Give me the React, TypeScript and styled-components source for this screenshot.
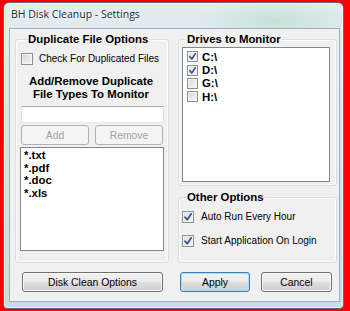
import React from 'react';
import styled, { createGlobalStyle } from 'styled-components';

const Global = createGlobalStyle`
  html, body { margin: 0; padding: 0; background: #ff0000; }
  body { width: 350px; height: 311px; overflow: hidden; }
  * { box-sizing: border-box; }
`;

const Page = styled.div`
  width: 350px;
  height: 311px;
  background: #ff0000;
  padding: 2px 6px 2px 3px;
  display: flex;
`;

const Window = styled.div`
  flex: 1;
  display: flex;
  flex-direction: column;
  border: 1px solid #5b6d7e;
  border-radius: 6px 6px 4px 4px;
  background:
    radial-gradient(ellipse 120px 30px at 80% 18px, rgba(175, 218, 196, 0.55), rgba(175, 218, 196, 0) 70%),
    linear-gradient(180deg, #e4ecf1 0%, #d8e3ea 45%, #cddbe5 100%);
  padding: 0 3px 6px 5px;
  box-shadow: inset 0 0 0 1px rgba(255, 255, 255, 0.55);
`;

const TitleBar = styled.div`
  height: 25px;
  padding: 3px 0 0 2px;
  font-family: "Open Sans", "Noto Sans", sans-serif;
  font-size: 10.5px;
  line-height: 16px;
  color: #1c2630;
  text-shadow: 0 0 5px rgba(255, 255, 255, 0.95), 0 0 2px rgba(255, 255, 255, 0.9);
  white-space: nowrap;
`;

const Client = styled.div`
  flex: 1;
  border: 1px solid #a2aeb9;
  background: #f0f0f0;
  display: flex;
  flex-direction: column;
  padding: 4px 2px 0 5px;
  font-family: "Liberation Sans", Arial, sans-serif;
  font-size: 10px;
  color: #000;
`;

const TopRow = styled.div`
  display: grid;
  grid-template-columns: 154px 159px;
  column-gap: 9px;
  height: 230px;
`;

const RightColumn = styled.div`
  display: flex;
  flex-direction: column;
  gap: 5px;
`;

const Group = styled.fieldset<{ $height?: number; $padL: number; $padR: number; $padB: number }>`
  margin: 0;
  min-width: 0;
  border: 1px solid #d5dfe5;
  border-radius: 3px;
  box-shadow: inset 0 0 0 1px #fbfbfb;
  padding: 0 ${p => p.$padR}px ${p => p.$padB}px ${p => p.$padL}px;
  display: block;
  ${p => (p.$height ? `height: ${p.$height}px; flex: none;` : 'flex: 1;')}
`;

const Legend = styled.legend<{ $indent: number }>`
  margin-left: ${p => p.$indent}px;
  padding: 0 1px;
  font-weight: bold;
  font-size: 11.4px;
  line-height: 12px;
  background: #f0f0f0;
  color: #000;
`;

const CheckRow = styled.label<{ $gap: number; $top: number }>`
  display: flex;
  align-items: center;
  gap: ${p => p.$gap}px;
  height: 13px;
  margin-top: ${p => p.$top}px;
  white-space: nowrap;
`;

const Box = styled.span<{ $size: number; $checked: boolean }>`
  width: ${p => p.$size}px;
  height: ${p => p.$size}px;
  flex: none;
  border: 1px solid #8e8f8f;
  background: ${p =>
    p.$checked
      ? 'linear-gradient(135deg, #d9dcee 0%, #f3f4fb 100%)'
      : 'linear-gradient(135deg, #d6d6d6 0%, #f7f7f7 100%)'};
  box-shadow: inset 0 0 0 1px #f4f4f4;
  display: flex;
  align-items: center;
  justify-content: center;
`;

const Heading = styled.div`
  margin-top: 10px;
  text-align: center;
  font-weight: bold;
  font-size: 11.4px;
  line-height: 13px;
  padding-right: 3px;
`;

const TextInput = styled.div`
  margin-top: 5px;
  height: 17px;
  background: #fff;
  border: 1px solid;
  border-color: #abadb3 #dbdfe6 #e3e9ef #e2e3ea;
`;

const ButtonPair = styled.div`
  margin-top: 2px;
  display: grid;
  grid-template-columns: 68px 68px;
  column-gap: 6px;
`;

const Button = styled.div<{ $width?: number; $variant?: 'normal' | 'disabled' | 'default' }>`
  height: 20px;
  ${p => (p.$width ? `width: ${p.$width}px;` : '')}
  border-radius: 3px;
  display: flex;
  align-items: center;
  justify-content: center;
  font-size: 10.4px;
  white-space: nowrap;
  border: 1px solid
    ${p => (p.$variant === 'disabled' ? '#adb2b5' : p.$variant === 'default' ? '#3c7fb1' : '#707070')};
  color: ${p => (p.$variant === 'disabled' ? '#a3a3a3' : '#000')};
  background: ${p =>
    p.$variant === 'disabled'
      ? '#f4f4f4'
      : 'linear-gradient(180deg, #f2f2f2 0%, #ebebeb 48%, #dddddd 52%, #cfcfcf 100%)'};
  box-shadow: inset 0 0 0 1px
    ${p => (p.$variant === 'disabled' ? '#f4f4f4' : p.$variant === 'default' ? '#a9dcf6' : '#fbfbfb')};
`;

const ListBox = styled.div<{ $top: number; $left?: number; $height: number }>`
  margin-top: ${p => p.$top}px;
  margin-left: ${p => p.$left ?? 0}px;
  height: ${p => p.$height}px;
  background: #fff;
  border: 1px solid #828790;
`;

const FileList = styled(ListBox)`
  padding: 1px 0 0 3px;
`;

const FileItem = styled.div`
  font-weight: bold;
  font-size: 11.4px;
  line-height: 12.7px;
`;

const DriveList = styled(ListBox)`
  padding: 2px 0 0 4px;
`;

const DriveRow = styled.div`
  display: flex;
  align-items: center;
  gap: 4px;
  height: 13.4px;
  font-weight: bold;
  font-size: 11.4px;
`;

const ButtonRow = styled.div`
  margin-top: 9px;
  height: 20px;
  display: flex;
  padding-left: 7px;
`;

const Spacer = styled.div<{ $w: number }>`
  width: ${p => p.$w}px;
  flex: none;
`;

function Check({ size, checked }: { size: number; checked: boolean }) {
  return (
    <Box $size={size} $checked={checked}>
      {checked && (
        <svg width={size - 2} height={size - 2} viewBox="0 0 10 10">
          <path d="M2 5.2 L4.2 7.8 L8.2 1.8" fill="none" stroke="#3b4e8c" strokeWidth="1.7" strokeLinecap="round" strokeLinejoin="round" />
        </svg>
      )}
    </Box>
  );
}

const files = ['*.txt', '*.pdf', '*.doc', '*.xls'];
const drives = [
  { name: 'C:\\', checked: true },
  { name: 'D:\\', checked: true },
  { name: 'G:\\', checked: false },
  { name: 'H:\\', checked: false },
];

export default function App() {
  return (
    <>
      <Global />
      <Page>
        <Window>
          <TitleBar>BH Disk Cleanup - Settings</TitleBar>
          <Client>
            <TopRow>
              <Group $padL={5} $padR={4} $padB={10}>
                <Legend $indent={6}>Duplicate File Options</Legend>
                <CheckRow $gap={6} $top={7}>
                  <Check size={12} checked={false} />
                  <span>Check For Duplicated Files</span>
                </CheckRow>
                <Heading>
                  Add/Remove Duplicate
                  <br />
                  File Types To Monitor
                </Heading>
                <TextInput />
                <ButtonPair>
                  <Button $variant="disabled">Add</Button>
                  <Button $variant="disabled">Remove</Button>
                </ButtonPair>
                <FileList $top={2} $left={-1} $height={104}>
                  {files.map(f => (
                    <FileItem key={f}>{f}</FileItem>
                  ))}
                </FileList>
              </Group>
              <RightColumn>
                <Group $height={153} $padL={3} $padR={6} $padB={3}>
                  <Legend $indent={4}>Drives to Monitor</Legend>
                  <DriveList $top={2} $height={135}>
                    {drives.map(d => (
                      <DriveRow key={d.name}>
                        <Check size={11} checked={d.checked} />
                        <span>{d.name}</span>
                      </DriveRow>
                    ))}
                  </DriveList>
                </Group>
                <Group $padL={3} $padR={6} $padB={10}>
                  <Legend $indent={4}>Other Options</Legend>
                  <CheckRow $gap={7} $top={7}>
                    <Check size={12} checked={true} />
                    <span>Auto Run Every Hour</span>
                  </CheckRow>
                  <CheckRow $gap={7} $top={11}>
                    <Check size={12} checked={true} />
                    <span>Start Application On Login</span>
                  </CheckRow>
                </Group>
              </RightColumn>
            </TopRow>
            <ButtonRow>
              <Button $width={141}>Disk Clean Options</Button>
              <Spacer $w={17} />
              <Button $width={70} $variant="default">Apply</Button>
              <Spacer $w={11} />
              <Button $width={71}>Cancel</Button>
            </ButtonRow>
          </Client>
        </Window>
      </Page>
    </>
  );
}
